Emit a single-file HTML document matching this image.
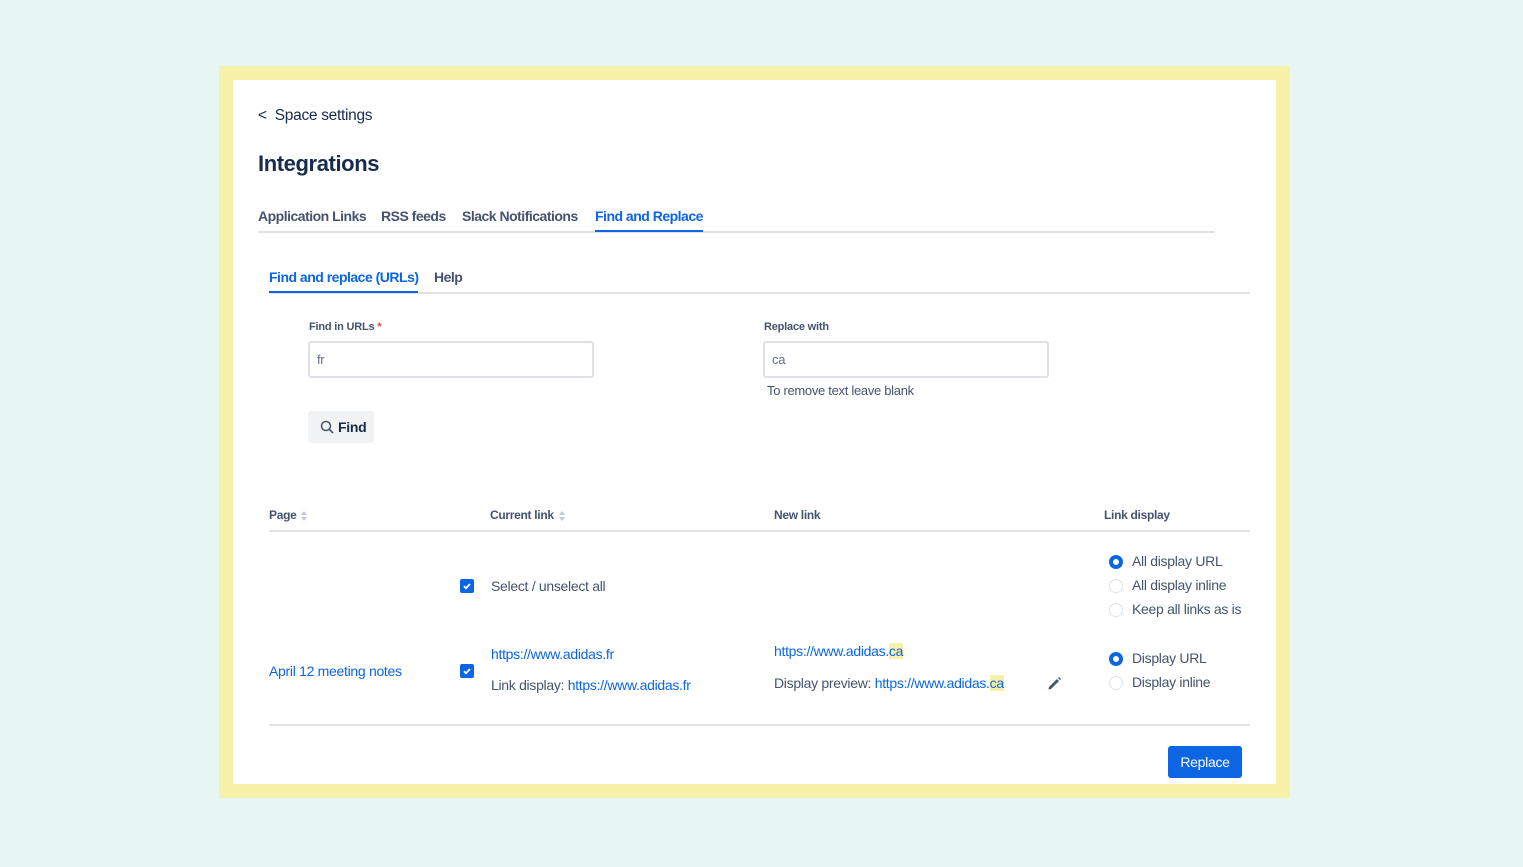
<!DOCTYPE html>
<html><head><meta charset="utf-8"><style>
*{margin:0;padding:0;box-sizing:border-box}
body{width:1523px;height:867px;background:#e7f6f2;font-family:"Liberation Sans",sans-serif;position:relative;overflow:hidden;color:#172b4d}
.y{position:absolute;left:219px;top:66px;width:1071px;height:732px;background:#f7f0a8}
.w{position:absolute;left:233px;top:80px;width:1043px;height:704px;background:#fff}
.a{position:absolute;white-space:nowrap;letter-spacing:-0.3px}
.blue{color:#0c66e4}
.hl{background:#f7f0a8}
.line{position:absolute;height:2px;background:#dfe1e6}
.cb{position:absolute;width:14px;height:14px;background:#0c66e4;border-radius:2px}
.rd{position:absolute;width:14px;height:14px;border-radius:50%;border:1.5px solid #dfe1e6;background:#fff}
.rd.on{border:4px solid #0c66e4}
.th{font-size:12px;font-weight:bold;color:#44546f}
.sort{display:inline-block;vertical-align:middle;margin-left:4px;width:8px;height:14px}
.tab{font-size:14px;font-weight:bold;color:#44546f;letter-spacing:-0.5px}
</style></head><body>
<div class="y"></div><div class="w"></div>
<div class="a" style="left:258px;top:107px;font-size:15.5px;color:#172b4d">&lt;&nbsp; Space settings</div>
<div class="a" style="left:258px;top:151px;font-size:22px;font-weight:bold;color:#172b4d;letter-spacing:-0.4px">Integrations</div>
<div class="a tab" style="left:258px;top:208px">Application Links</div>
<div class="a tab" style="left:381px;top:208px">RSS feeds</div>
<div class="a tab" style="left:462px;top:208px">Slack Notifications</div>
<div class="a tab blue" style="left:595px;top:208px;color:#0c66e4">Find and Replace</div>
<div class="line" style="left:258px;top:231px;width:957px"></div>
<div class="line" style="left:595px;top:230px;width:108px;background:#0c66e4"></div>
<div class="a tab" style="left:269px;top:269px;color:#0c66e4">Find and replace (URLs)</div>
<div class="a tab" style="left:434px;top:269px">Help</div>
<div class="line" style="left:269px;top:292px;width:981px"></div>
<div class="line" style="left:269px;top:291px;width:149px;background:#0c66e4"></div>
<div class="a" style="left:309px;top:321px;font-size:11px;font-weight:bold;color:#44546f;letter-spacing:-0.2px">Find in URLs <span style="color:#e2483d">*</span></div>
<div class="a" style="left:308px;top:341px;width:286px;height:37px;border:2px solid #dfe1e6;border-radius:3px;font-size:13px;color:#626f86;padding:9px 7px">fr</div>
<div class="a" style="left:764px;top:321px;font-size:11px;font-weight:bold;color:#44546f;letter-spacing:-0.2px">Replace with</div>
<div class="a" style="left:763px;top:341px;width:286px;height:37px;border:2px solid #dfe1e6;border-radius:3px;font-size:13px;color:#626f86;padding:9px 7px">ca</div>
<div class="a" style="left:767px;top:383px;font-size:13px;color:#44546f">To remove text leave blank</div>
<div class="a" style="left:308px;top:411px;width:66px;height:32px;background:#f1f2f4;border-radius:3px;font-size:14px;font-weight:bold;color:#172b4d;padding:8px 0 0 12px"><svg width="14" height="14" viewBox="0 0 14 14" style="vertical-align:-2px;margin-right:4px"><circle cx="6" cy="6" r="4.5" fill="none" stroke="#44546f" stroke-width="1.5"/><path d="M9.3 9.3L13 13" stroke="#44546f" stroke-width="1.6"/></svg>Find</div>
<div class="a th" style="left:269px;top:508px">Page<svg class="sort" viewBox="0 0 8 14"><path d="M1 6L4 2L7 6Z M1 8L4 12L7 8Z" fill="#c1c7d0"/></svg></div>
<div class="a th" style="left:490px;top:508px">Current link<svg class="sort" viewBox="0 0 8 14"><path d="M1 6L4 2L7 6Z M1 8L4 12L7 8Z" fill="#c1c7d0"/></svg></div>
<div class="a th" style="left:774px;top:508px">New link</div>
<div class="a th" style="left:1104px;top:508px">Link display</div>
<div class="line" style="left:269px;top:530px;width:981px"></div>
<div class="cb" style="left:460px;top:579px"><svg width="14" height="14" viewBox="0 0 14 14"><path d="M4 7.2L6 9.2L10 5" fill="none" stroke="#fff" stroke-width="1.8"/></svg></div>
<div class="a" style="left:491px;top:578px;font-size:14px;color:#44546f">Select / unselect all</div>
<div class="rd on" style="left:1109px;top:555px"></div><div class="a" style="left:1132px;top:553px;font-size:14px;color:#44546f">All display URL</div>
<div class="rd" style="left:1109px;top:579px"></div><div class="a" style="left:1132px;top:577px;font-size:14px;color:#44546f">All display inline</div>
<div class="rd" style="left:1109px;top:603px"></div><div class="a" style="left:1132px;top:601px;font-size:14px;color:#44546f">Keep all links as is</div>
<div class="a blue" style="left:269px;top:663px;font-size:14px">April 12 meeting notes</div>
<div class="cb" style="left:460px;top:664px"><svg width="14" height="14" viewBox="0 0 14 14"><path d="M4 7.2L6 9.2L10 5" fill="none" stroke="#fff" stroke-width="1.8"/></svg></div>
<div class="a blue" style="left:491px;top:646px;font-size:14px">https://www.adidas.fr</div>
<div class="a" style="left:491px;top:677px;font-size:14px;color:#44546f">Link display: <span class="blue">https://www.adidas.fr</span></div>
<div class="a blue" style="left:774px;top:643px;font-size:14px">https://www.adidas.<span class="hl">ca</span></div>
<div class="a" style="left:774px;top:675px;font-size:14px;color:#44546f">Display preview: <span class="blue">https://www.adidas.<span class="hl">ca</span></span></div>
<svg class="a" style="left:1047px;top:676px" width="15" height="15" viewBox="0 0 15 15"><path d="M2 11L10 3L12 5L4 13L1.5 13.5Z" fill="#44546f"/><path d="M11 2L12 1L14 3L13 4Z" fill="#44546f"/></svg>
<div class="rd on" style="left:1109px;top:652px"></div><div class="a" style="left:1132px;top:650px;font-size:14px;color:#44546f">Display URL</div>
<div class="rd" style="left:1109px;top:676px"></div><div class="a" style="left:1132px;top:674px;font-size:14px;color:#44546f">Display inline</div>
<div class="line" style="left:269px;top:724px;width:981px"></div>
<div class="a" style="left:1168px;top:746px;width:74px;height:32px;background:#0c66e4;border-radius:3px;color:#fff;font-size:14px;text-align:center;line-height:32px">Replace</div>
</body></html>
